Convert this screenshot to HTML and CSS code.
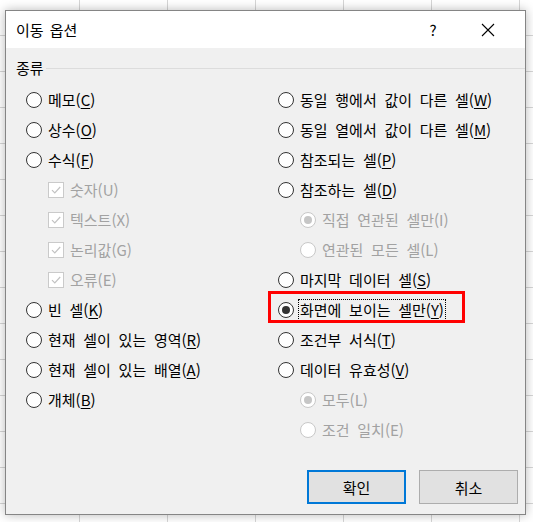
FILE: index.html
```html
<!DOCTYPE html>
<html lang="ko">
<head>
<meta charset="utf-8">
<link rel="stylesheet" href="styles.css">
</head>
<body>
<div class="dialog">
  <div class="titlebar">
    <span class="title">이동 옵션</span>
    <span class="help">?</span>
    <svg class="close" width="14" height="14" viewBox="0 0 14 14"><path d="M1 1L13 13M13 1L1 13" stroke="#000" stroke-width="1.1" fill="none"/></svg>
  </div>
  <div class="body">
    <div class="group-head"><span>종류</span><span class="line"></span></div>
    <div class="cols">
      <div class="col">
        <div class="row"><span class="radio"></span><span>메모(<u>C</u>)</span></div>
        <div class="row"><span class="radio"></span><span>상수(<u>O</u>)</span></div>
        <div class="row"><span class="radio"></span><span>수식(<u>F</u>)</span></div>
        <div class="row sub disabled"><span class="check"><svg width="14" height="14" viewBox="0 0 14 14"><path d="M3 7.2L5.8 10L11.2 4" stroke="#c2c2c2" stroke-width="1.2" fill="none"/></svg></span><span>숫자(U)</span></div>
        <div class="row sub disabled"><span class="check"><svg width="14" height="14" viewBox="0 0 14 14"><path d="M3 7.2L5.8 10L11.2 4" stroke="#c2c2c2" stroke-width="1.2" fill="none"/></svg></span><span>텍스트(X)</span></div>
        <div class="row sub disabled"><span class="check"><svg width="14" height="14" viewBox="0 0 14 14"><path d="M3 7.2L5.8 10L11.2 4" stroke="#c2c2c2" stroke-width="1.2" fill="none"/></svg></span><span>논리값(G)</span></div>
        <div class="row sub disabled"><span class="check"><svg width="14" height="14" viewBox="0 0 14 14"><path d="M3 7.2L5.8 10L11.2 4" stroke="#c2c2c2" stroke-width="1.2" fill="none"/></svg></span><span>오류(E)</span></div>
        <div class="row"><span class="radio"></span><span>빈 셀(<u>K</u>)</span></div>
        <div class="row"><span class="radio"></span><span>현재 셀이 있는 영역(<u>R</u>)</span></div>
        <div class="row"><span class="radio"></span><span>현재 셀이 있는 배열(<u>A</u>)</span></div>
        <div class="row"><span class="radio"></span><span>개체(<u>B</u>)</span></div>
      </div>
      <div class="col">
        <div class="row"><span class="radio"></span><span>동일 행에서 값이 다른 셀(<u>W</u>)</span></div>
        <div class="row"><span class="radio"></span><span>동일 열에서 값이 다른 셀(<u>M</u>)</span></div>
        <div class="row"><span class="radio"></span><span>참조되는 셀(<u>P</u>)</span></div>
        <div class="row"><span class="radio"></span><span>참조하는 셀(<u>D</u>)</span></div>
        <div class="row sub disabled"><span class="radio on"></span><span>직접 연관된 셀만(I)</span></div>
        <div class="row sub disabled"><span class="radio"></span><span>연관된 모든 셀(L)</span></div>
        <div class="row"><span class="radio"></span><span>마지막 데이터 셀(<u>S</u>)</span></div>
        <div class="row marked"><span class="radio on"></span><span class="focus">화면에 보이는 셀만(<u>Y</u>)</span><span class="hl"></span></div>
        <div class="row"><span class="radio"></span><span>조건부 서식(<u>T</u>)</span></div>
        <div class="row"><span class="radio"></span><span>데이터 유효성(<u>V</u>)</span></div>
        <div class="row sub disabled"><span class="radio on"></span><span>모두(L)</span></div>
        <div class="row sub disabled"><span class="radio"></span><span>조건 일치(E)</span></div>
      </div>
    </div>
    <div class="footer">
      <button class="btn default">확인</button>
      <button class="btn">취소</button>
    </div>
  </div>
</div>
</body>
</html>
```

FILE: styles.css
```css
* { box-sizing: border-box; }
html, body { margin: 0; padding: 0; }
body {
  width: 533px;
  height: 522px;
  overflow: hidden;
  font-family: "Noto Sans CJK KR", "Noto Sans", sans-serif;
  font-size: 15px;
  word-spacing: 3.5px;
  color: #000;
  background-color: #fff;
  background-image:
    repeating-linear-gradient(to right, transparent 0, transparent 78px, #d6d6d6 78px, #d6d6d6 79px, transparent 79px, transparent 88px),
    repeating-linear-gradient(to bottom, transparent 0, transparent 35px, #d6d6d6 35px, #d6d6d6 36px);
  background-position: 1px 0, 0 0;
  padding-top: 10px;
  padding-left: 5px;
}
.dialog {
  width: 521px;
  height: 505px;
  border: 1px solid #858585;
  box-shadow: 0 0 10px rgba(0,0,0,0.28);
  display: flex;
  flex-direction: column;
  background: #f0f0f0;
}
.titlebar {
  height: 37px;
  background: #fff;
  display: flex;
  align-items: center;
  padding-left: 10px;
  padding-right: 30px;
}
.title { font-size: 15px; line-height: 20px; word-spacing: 2px; }
.help {
  margin-left: auto;
  margin-right: 44px;
  font-size: 15px;
  line-height: 20px;
  width: 8px;
  text-align: center;
}
.close { display: block; }
.body {
  flex: 1;
  display: flex;
  flex-direction: column;
  padding: 8px 0 0 10px;
}
.group-head {
  display: flex;
  align-items: center;
  height: 24px;
  line-height: 20px;
}
.group-head .line {
  flex: 1;
  height: 1px;
  background: #dcdcdc;
  margin-left: 2px;
}
.cols {
  margin-top: 5px;
  padding-left: 10px;
  display: grid;
  grid-template-columns: 252px 1fr;
}
.row {
  height: 30px;
  display: flex;
  align-items: center;
  gap: 6px;
  line-height: 20px;
  white-space: nowrap;
}
.row u { text-underline-offset: 2px; text-decoration-thickness: 1px; }
.row.sub { padding-left: 22px; }
.row.disabled { color: #a2a2a2; }
.radio {
  width: 16px;
  height: 16px;
  border-radius: 50%;
  border: 1px solid #333;
  background: #fff;
  display: flex;
  align-items: center;
  justify-content: center;
  flex: none;
}
.radio.on::after {
  content: "";
  width: 8px;
  height: 8px;
  border-radius: 50%;
  background: #333;
}
.disabled .radio { border-color: #c8c8c8; }
.disabled .radio.on::after { background: #c6c6c6; }
.check {
  width: 16px;
  height: 16px;
  border: 1px solid #cacaca;
  background: #fff;
  display: flex;
  align-items: center;
  justify-content: center;
  flex: none;
}
.check svg { display: block; }
.marked { position: relative; }
.focus {
  outline: 1px dotted #000;
  outline-offset: 0;
  padding: 0 1px;
  margin-left: -1px;
}
.hl {
  position: absolute;
  left: -10px;
  top: -4px;
  width: 197px;
  height: 32px;
  border: 3px solid #f00;
  pointer-events: none;
}
.footer {
  margin-top: auto;
  display: flex;
  justify-content: flex-end;
  gap: 13px;
  padding: 0 7px 10px 0;
}
.btn {
  width: 99px;
  height: 34px;
  background: #e1e1e1;
  border: 1px solid #adadad;
  font-family: inherit;
  font-size: 15px;
  color: #000;
  padding: 0;
}
.btn.default { border: 2px solid #0078d7; }
```
